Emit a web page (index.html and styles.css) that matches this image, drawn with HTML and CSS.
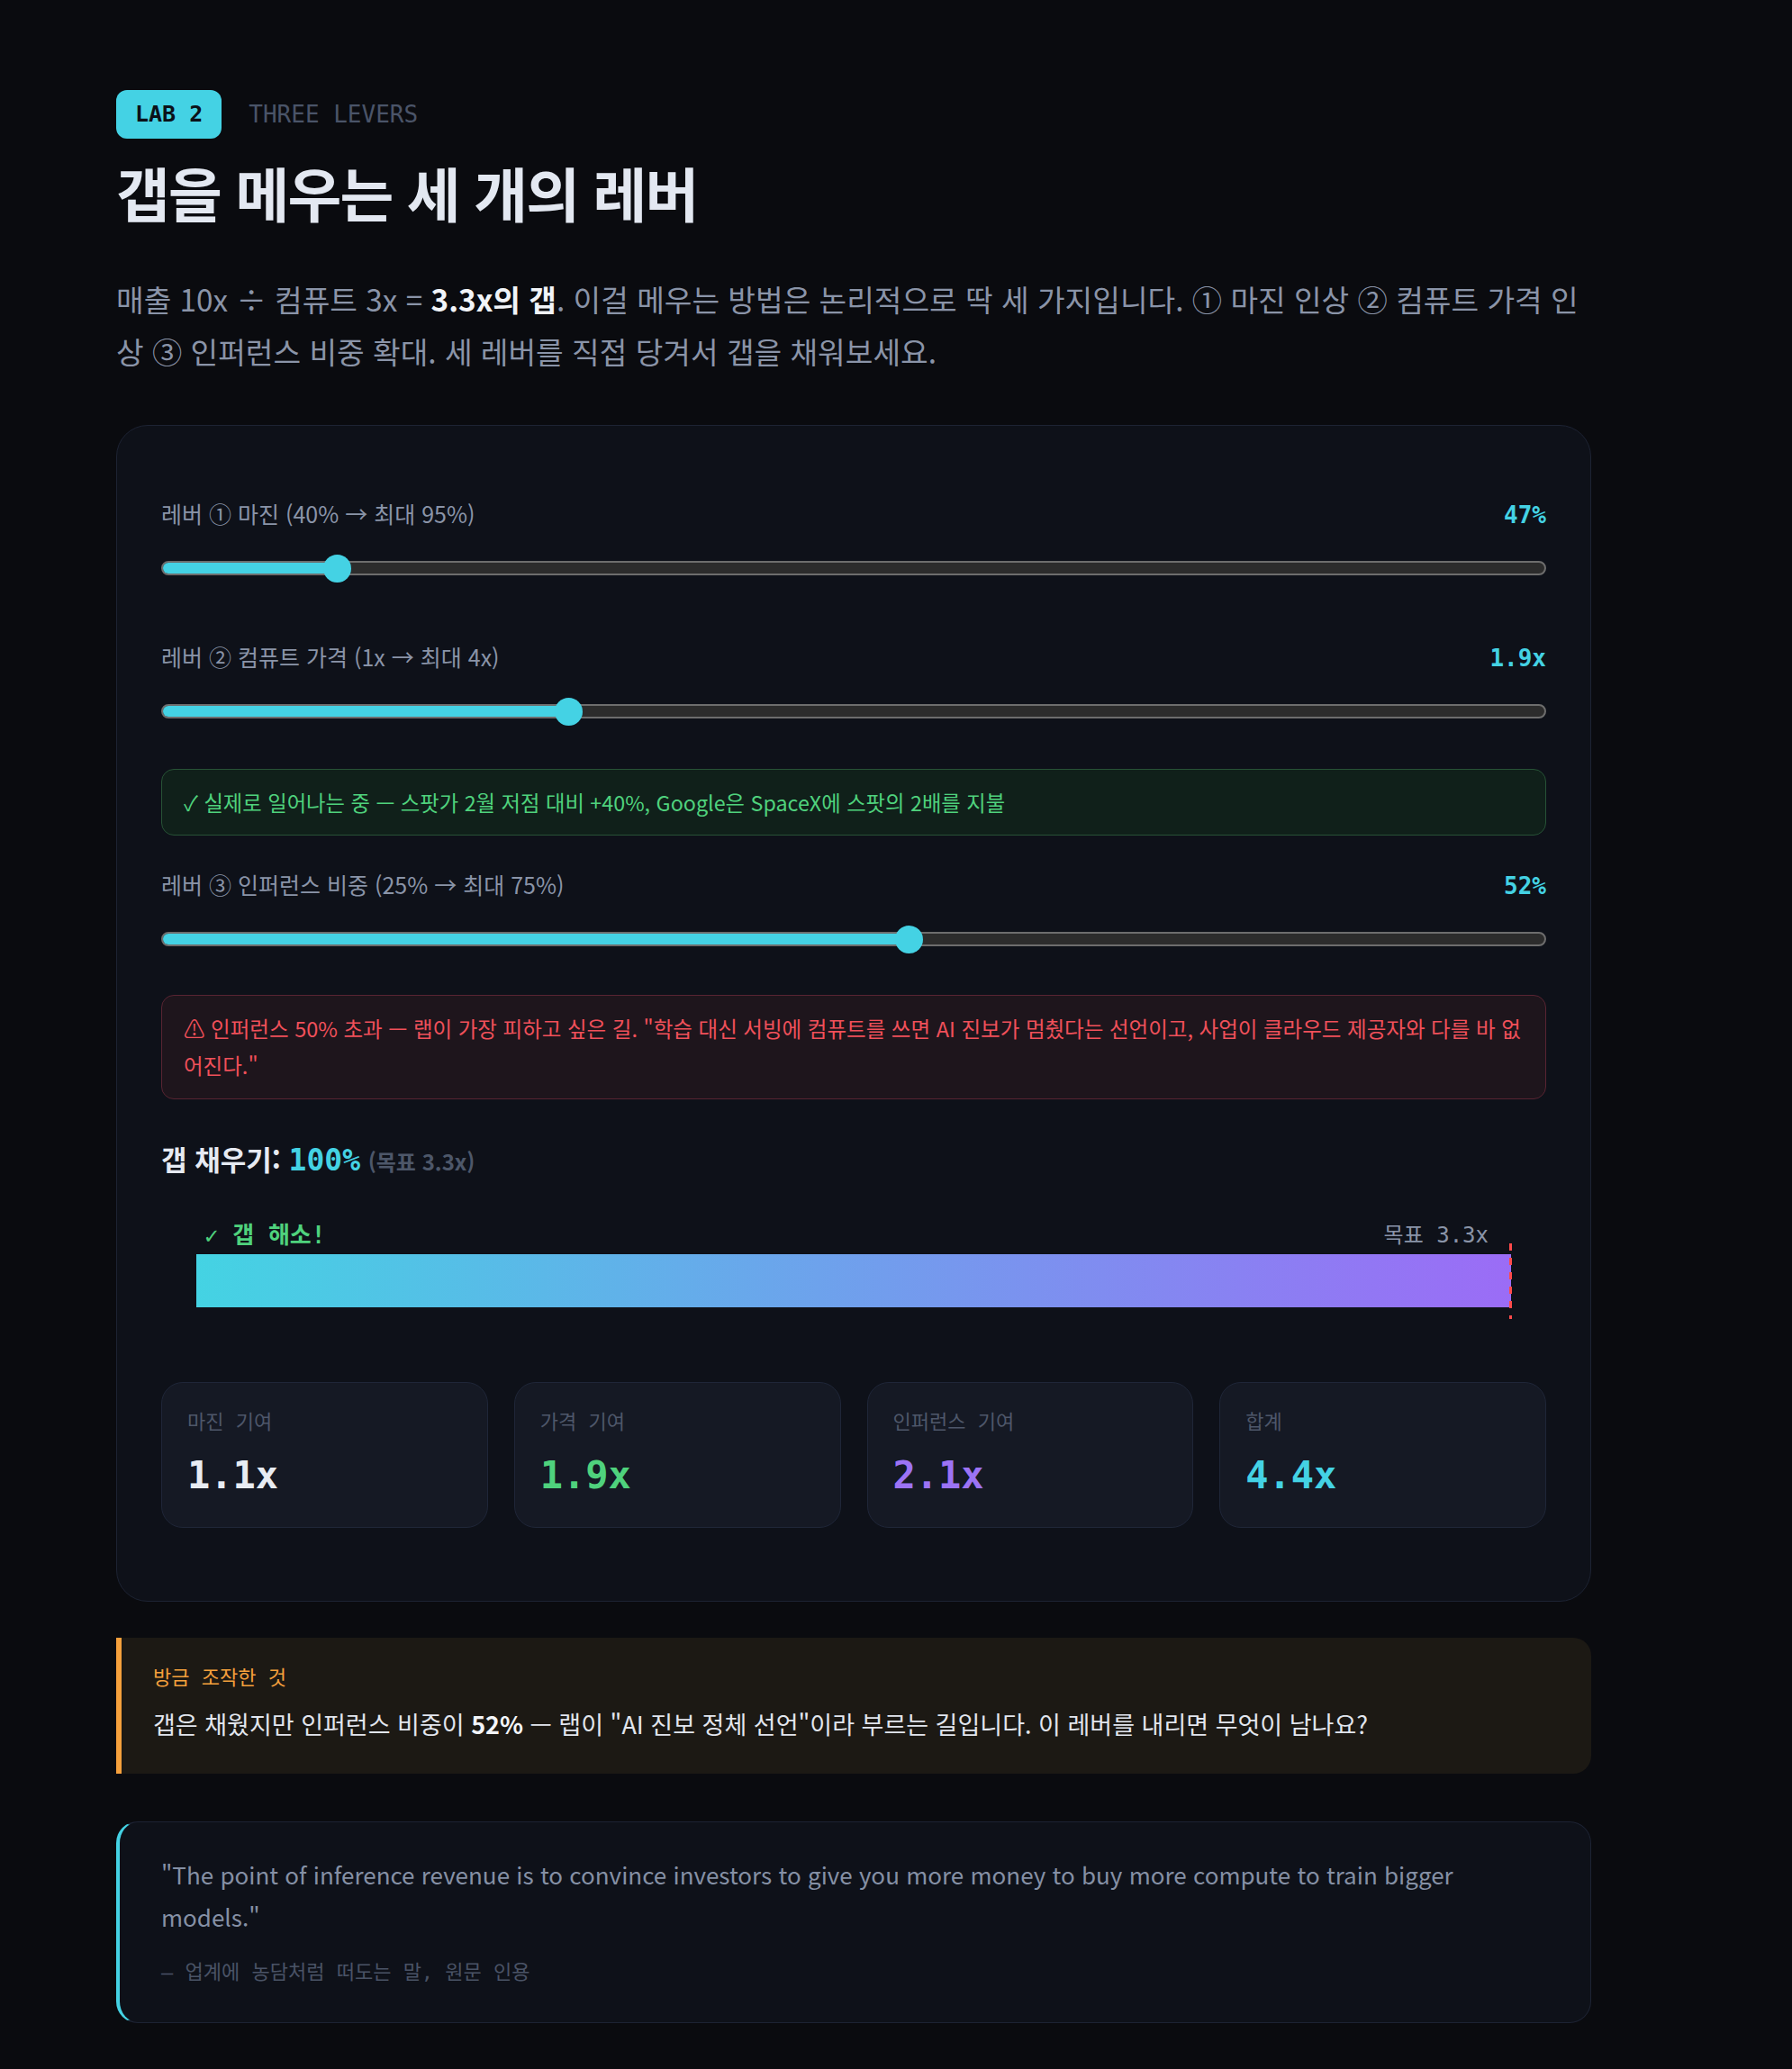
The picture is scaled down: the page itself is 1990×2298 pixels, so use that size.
FILE: index.html
```html
<!DOCTYPE html>
<html lang="ko">
<head>
<meta charset="utf-8">
<title>LAB 2 — THREE LEVERS</title>
<link rel="stylesheet" href="styles.css">
</head>
<body>
<main class="page">
  <div class="eyebrow">
    <span class="badge">LAB 2</span>
    <span class="kicker">THREE LEVERS</span>
  </div>
  <h1 class="title">갭을 메우는 세 개의 레버</h1>
  <p class="lead">매출 10x ÷ 컴퓨트 3x = <strong>3.3x의 갭</strong>. 이걸 메우는 방법은 논리적으로 딱 세 가지입니다. ① 마진 인상 ② 컴퓨트 가격 인상 ③ 인퍼런스 비중 확대. 세 레버를 직접 당겨서 갭을 채워보세요.</p>

  <section class="lab">
    <div class="lever">
      <div class="lever-head">
        <span class="lever-label">레버 ① 마진 (40% → 최대 95%)</span>
        <span class="lever-value">47%</span>
      </div>
      <div class="slider">
        <div class="track"><div class="fill" style="width:12.7%"></div></div>
        <span class="thumb" style="left:12.7%"></span>
      </div>
    </div>

    <div class="lever lever-next">
      <div class="lever-head">
        <span class="lever-label">레버 ② 컴퓨트 가격 (1x → 최대 4x)</span>
        <span class="lever-value">1.9x</span>
      </div>
      <div class="slider">
        <div class="track"><div class="fill" style="width:29.4%"></div></div>
        <span class="thumb" style="left:29.4%"></span>
      </div>
      <div class="note note-ok">✓ 실제로 일어나는 중 — 스팟가 2월 저점 대비 +40%, Google은 SpaceX에 스팟의 2배를 지불</div>
    </div>

    <div class="lever lever-after-note">
      <div class="lever-head">
        <span class="lever-label">레버 ③ 인퍼런스 비중 (25% → 최대 75%)</span>
        <span class="lever-value">52%</span>
      </div>
      <div class="slider">
        <div class="track"><div class="fill" style="width:54%"></div></div>
        <span class="thumb" style="left:54%"></span>
      </div>
      <div class="note note-warn">⚠ 인퍼런스 50% 초과 — 랩이 가장 피하고 싶은 길. "학습 대신 서빙에 컴퓨트를 쓰면 AI 진보가 멈췄다는 선언이고, 사업이 클라우드 제공자와 다를 바 없어진다."</div>
    </div>

    <div class="gap-head">갭 채우기: <span class="gap-pct">100%</span> <span class="gap-target">(목표 3.3x)</span></div>

    <div class="gap-viz">
      <div class="gap-labels">
        <span class="gap-ok">✓ 갭 해소!</span>
        <span class="gap-goal">목표 3.3x</span>
      </div>
      <div class="gap-bar">
        <div class="gap-fill" style="width:100%"></div>
        <span class="gap-marker" style="left:100%"></span>
      </div>
    </div>

    <div class="stats">
      <div class="stat">
        <div class="stat-label">마진 기여</div>
        <div class="stat-value v-white">1.1x</div>
      </div>
      <div class="stat">
        <div class="stat-label">가격 기여</div>
        <div class="stat-value v-green">1.9x</div>
      </div>
      <div class="stat">
        <div class="stat-label">인퍼런스 기여</div>
        <div class="stat-value v-purple">2.1x</div>
      </div>
      <div class="stat">
        <div class="stat-label">합계</div>
        <div class="stat-value v-cyan">4.4x</div>
      </div>
    </div>
  </section>

  <aside class="callout">
    <div class="callout-label">방금 조작한 것</div>
    <p class="callout-body">갭은 채웠지만 인퍼런스 비중이 <strong>52%</strong> — 랩이 "AI 진보 정체 선언"이라 부르는 길입니다. 이 레버를 내리면 무엇이 남나요?</p>
  </aside>

  <blockquote class="quote">
    <p class="quote-text">"The point of inference revenue is to convince investors to give you more money to buy more compute to train bigger models."</p>
    <div class="quote-src">— 업계에 농담처럼 떠도는 말, 원문 인용</div>
  </blockquote>
</main>
</body>
</html>
```

FILE: styles.css
```css
* { box-sizing: border-box; }

html, body { margin: 0; padding: 0; }

body {
  background: #0a0b0f;
  color: #e6eaf2;
  font-family: "Noto Sans CJK KR", "Noto Sans", sans-serif;
}

.page {
  width: 1638px;
  margin-left: 129px;
  padding: 100px 0 53px;
}

/* ---------- header ---------- */
.eyebrow {
  display: flex;
  align-items: center;
  gap: 30px;
}

.badge {
  font-family: "DejaVu Sans Mono", "Noto Sans CJK KR", monospace;
  font-weight: 700;
  font-size: 25px;
  line-height: 54px;
  height: 54px;
  padding: 0 21px;
  background: #44d2e4;
  color: #0b1118;
  border-radius: 12px;
}

.kicker {
  font-family: "DejaVu Sans Mono", "Noto Sans CJK KR", monospace;
  font-size: 26px;
  color: #4a5468;
}

.title {
  margin: 20px 0 0;
  font-size: 65px;
  line-height: 78px;
  font-weight: 700;
  letter-spacing: -1.8px;
  color: #e3e8f1;
}

.lead {
  margin: 51px 0 0;
  font-size: 33.3px;
  line-height: 58px;
  color: #8a94a8;
}

.lead strong {
  color: #f1f4f8;
  font-weight: 700;
}

/* ---------- lab card ---------- */
.lab {
  margin-top: 53px;
  background: #0e1119;
  border: 1px solid #1d2333;
  border-radius: 35px;
  padding: 78px 49px 81px;
}

.lever-next { margin-top: 63px; }
.lever-after-note { margin-top: 35px; }

.lever-head {
  display: flex;
  justify-content: space-between;
  align-items: baseline;
  height: 38px;
  line-height: 38px;
}

.lever-label {
  font-size: 25px;
  color: #8a94a8;
}

.lever-value {
  font-family: "DejaVu Sans Mono", "Noto Sans CJK KR", monospace;
  font-weight: 700;
  font-size: 26px;
  color: #44d2e4;
}

.slider {
  position: relative;
  height: 32px;
  margin-top: 26px;
  display: flex;
  align-items: center;
}

.track {
  flex: 1;
  height: 16px;
  border: 2px solid #6d6d6d;
  border-radius: 8px;
  background: #2c2c2c;
  overflow: hidden;
}

.fill {
  height: 100%;
  background: #44d2e4;
}

.thumb {
  position: absolute;
  top: 50%;
  width: 31px;
  height: 31px;
  margin: -15.5px 0 0 -15.5px;
  border-radius: 50%;
  background: #44d2e4;
}

.note {
  font-size: 23.3px;
  border-radius: 14px;
  padding: 17px 24px;
  line-height: 38px;
}

.note-ok {
  margin-top: 48px;
  background: #10201a;
  border: 1px solid #275236;
  color: #4fd27d;
}

.note-warn {
  margin-top: 46px;
  padding: 16px 24px;
  font-size: 23.5px;
  line-height: 41px;
  background: #1e151c;
  border: 1px solid #582432;
  color: #f0505a;
}

/* ---------- gap meter ---------- */
.gap-head {
  margin-top: 43px;
  font-size: 31px;
  line-height: 45px;
  font-weight: 700;
  color: #e6eaf2;
}

.gap-pct {
  font-family: "DejaVu Sans Mono", "Noto Sans CJK KR", monospace;
  font-size: 33px;
  color: #44d2e4;
}

.gap-target {
  font-size: 24px;
  font-weight: 600;
  color: #4d5769;
}

.gap-viz {
  margin-top: 42px;
  padding: 0 39px;
}

.gap-labels {
  display: flex;
  justify-content: space-between;
  align-items: center;
  height: 30px;
  padding: 0 25px 0 9px;
  font-family: "DejaVu Sans Mono", "Noto Sans CJK KR", monospace;
}

.gap-ok {
  font-size: 26px;
  font-weight: 700;
  color: #4fd27d;
}

.gap-goal {
  font-size: 24px;
  color: #8a94a8;
}

.gap-bar {
  position: relative;
  margin-top: 9px;
  height: 59px;
  background: #161a24;
}

.gap-fill {
  height: 100%;
  background: linear-gradient(90deg, #44d3e3 0%, #9b6cf6 100%);
}

.gap-marker {
  position: absolute;
  top: -12px;
  bottom: -13px;
  width: 3px;
  margin-left: -2px;
  background: repeating-linear-gradient(180deg, #ff4a4a 0 8px, transparent 8px 16px);
}

/* ---------- stats ---------- */
.stats {
  margin-top: 83px;
  display: grid;
  grid-template-columns: repeat(4, 1fr);
  gap: 29px;
}

.stat {
  background: #151924;
  border: 1px solid #1f2638;
  border-radius: 24px;
  padding: 27px 28px 32px;
}

.stat-label {
  font-family: "DejaVu Sans Mono", "Noto Sans CJK KR", monospace;
  font-size: 22px;
  line-height: 33px;
  color: #4e576a;
}

.stat-value {
  margin-top: 18px;
  font-family: "DejaVu Sans Mono", "Noto Sans CJK KR", monospace;
  font-weight: 700;
  font-size: 42px;
  line-height: 50px;
}

.v-white { color: #e8ecf3; }
.v-green { color: #4fd27d; }
.v-purple { color: #9c73f5; }
.v-cyan { color: #44d2e4; }

/* ---------- callout ---------- */
.callout {
  margin-top: 40px;
  background: #1c1914;
  border-left: 6px solid #f5a03c;
  border-radius: 0 20px 20px 0;
  padding: 28px 35px 33px;
}

.callout-label {
  font-family: "DejaVu Sans Mono", "Noto Sans CJK KR", monospace;
  font-size: 22px;
  line-height: 33px;
  color: #f5a03c;
}

.callout-body {
  margin: 13px 0 0;
  font-size: 27px;
  line-height: 44px;
  color: #e2e6ee;
}

.callout-body strong { font-weight: 700; color: #f3f5f9; }

/* ---------- quote ---------- */
.quote {
  margin: 53px 0 0;
  background: #0e1119;
  border: 1px solid #1d2333;
  border-left: 4px solid #44d2e4;
  border-radius: 24px;
  padding: 34px 48px 39px 46px;
}

.quote-text {
  margin: 0;
  font-size: 26px;
  line-height: 47px;
  color: #8590a5;
}

.quote-src {
  margin-top: 22px;
  font-family: "DejaVu Sans Mono", "Noto Sans CJK KR", monospace;
  font-size: 22px;
  line-height: 33px;
  color: #4a5366;
}
```
